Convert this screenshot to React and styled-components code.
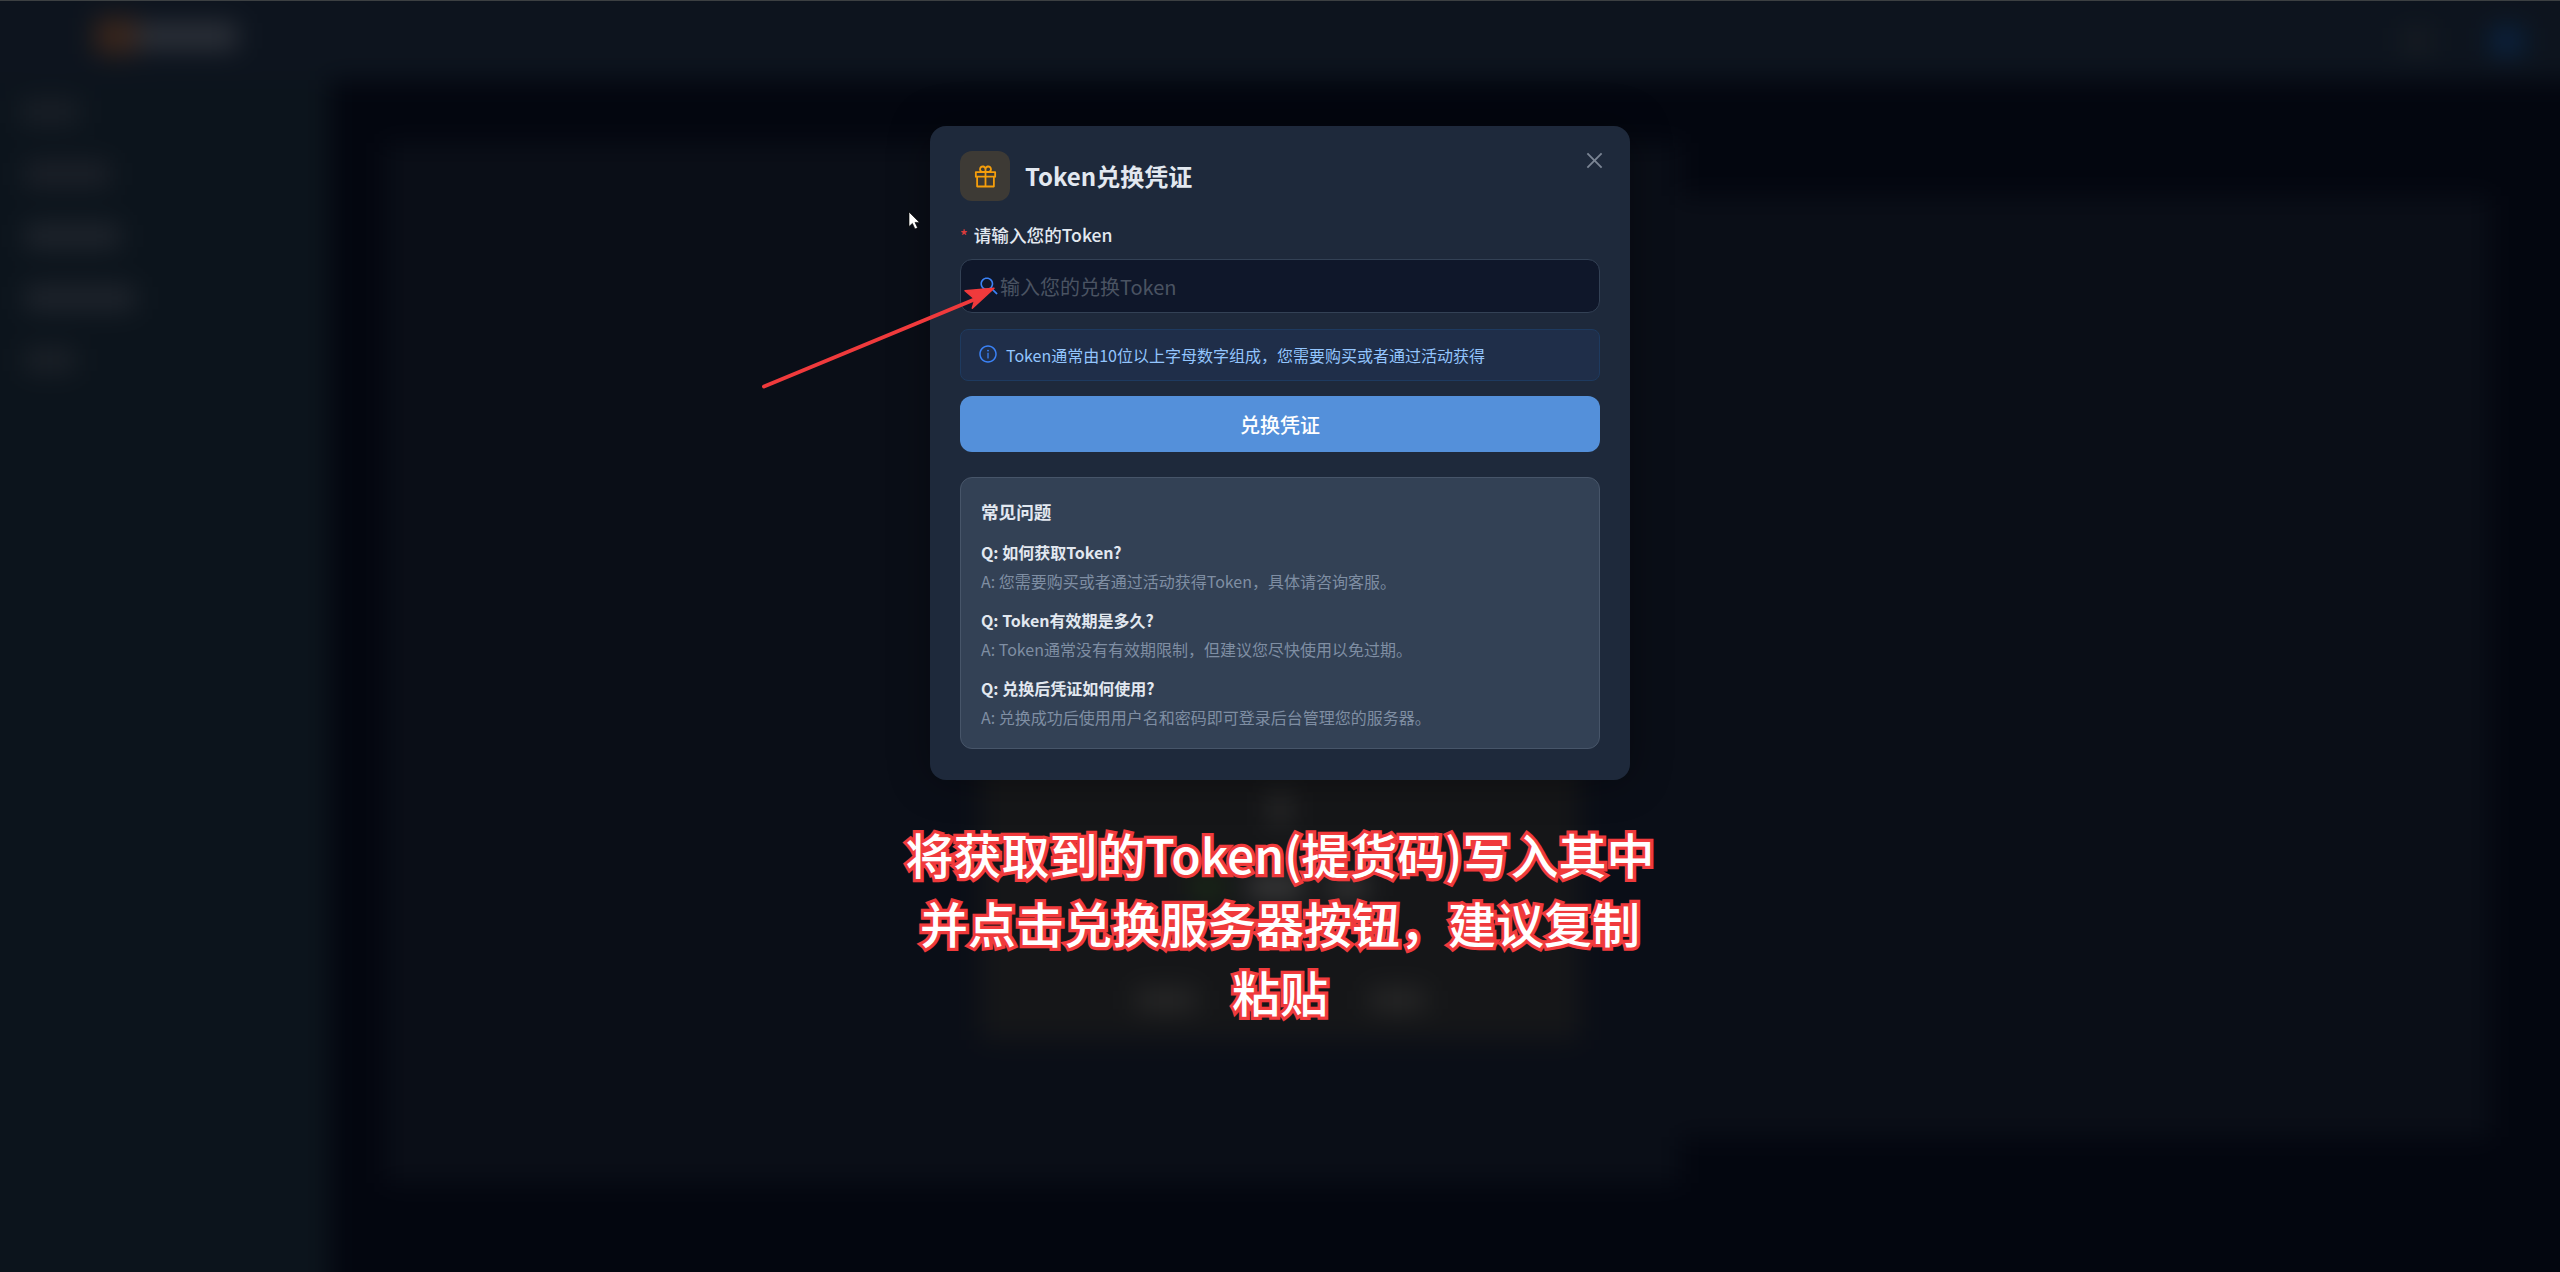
import React from "react";
import styled, { createGlobalStyle } from "styled-components";
import { AiOutlineClose, AiOutlineGift, AiOutlineInfoCircle, AiOutlineSearch } from "react-icons/ai";

const FONT = `"Noto Sans CJK SC", sans-serif`;

const faqs = [
  { q: "Q: 如何获取Token?", a: "A: 您需要购买或者通过活动获得Token，具体请咨询客服。" },
  { q: "Q: Token有效期是多久?", a: "A: Token通常没有有效期限制，但建议您尽快使用以免过期。" },
  { q: "Q: 兑换后凭证如何使用?", a: "A: 兑换成功后使用用户名和密码即可登录后台管理您的服务器。" },
];

const menu = [
  { w: 60, ml: 10, c: "#1a1f27" },
  { w: 85, ml: 15, c: "#1d2129" },
  { w: 95, ml: 15, c: "#20252d" },
  { w: 110, ml: 15, c: "#20252d" },
  { w: 50, ml: 15, c: "#1c2128" },
];

const App = () => {
  return (
    <Screen>
      <GlobalStyle />
      <Backdrop>
        <TopBar>
          <Logo>
            <LogoMark />
            <LogoName />
          </Logo>
          <TopActions>
            <TopIcon $color="#171c22" />
            <TopIcon $color="#0a2444" />
          </TopActions>
        </TopBar>
        <SideBar>
          {menu.map((item, i) => (
            <MenuBar key={i} $w={item.w} $ml={item.ml} $color={item.c} />
          ))}
        </SideBar>
        <Main>
          <LeftPanel>
            <EmptyCard>
              <Tick />
              <BlurRow $top={50}>
                <Dot />
                <Bar $w={55} $color="#3d3d3d" />
                <Bar $w={40} $color="#363636" />
              </BlurRow>
              <BlurRow $top={91}>
                <Bar $w={60} $color="#282828" />
                <RowSpacer />
                <Bar $w={55} $color="#282828" />
              </BlurRow>
            </EmptyCard>
          </LeftPanel>
          <RightPanel />
        </Main>
      </Backdrop>
      <EdgeLine />

      <Overlay>
        <Modal>
          <CloseButton aria-label="关闭">
            <AiOutlineClose />
          </CloseButton>
          <ModalHeader>
            <IconBox>
              <AiOutlineGift />
            </IconBox>
            <ModalTitle>Token兑换凭证</ModalTitle>
          </ModalHeader>

          <FieldLabel>
            <Required>*</Required>请输入您的Token
          </FieldLabel>
          <InputWrap>
            <AiOutlineSearch />
            <TokenInput placeholder="输入您的兑换Token" />
          </InputWrap>

          <InfoBox>
            <AiOutlineInfoCircle />
            <span>Token通常由10位以上字母数字组成，您需要购买或者通过活动获得</span>
          </InfoBox>

          <SubmitButton>兑换凭证</SubmitButton>

          <FaqBox>
            <FaqTitle>常见问题</FaqTitle>
            {faqs.map((item, i) => (
              <FaqItem key={i}>
                <Question>{item.q}</Question>
                <Answer>{item.a}</Answer>
              </FaqItem>
            ))}
          </FaqBox>
        </Modal>
        <Caption>将获取到的Token(提货码)写入其中并点击兑换服务器按钮，建议复制粘贴</Caption>
      </Overlay>

      <Annotation viewBox="0 0 2560 1272">
        <line x1="764" y1="386.5" x2="978" y2="298" stroke="#f03a3c" strokeWidth="4" strokeLinecap="round" />
        <polygon
          points="994,288.3 965,290.7 975,299.3 972.3,308.3"
          fill="#f03a3c"
          stroke="#f03a3c"
          strokeWidth="1.5"
          strokeLinejoin="round"
        />
        <path d="M909 212 L909 226.5 L912.4 223.4 L915 229 L917.6 227.8 L915 222.4 L919.5 222.4 Z" fill="#fff" stroke="#000" strokeWidth="0.6" />
      </Annotation>
    </Screen>
  );
};

const GlobalStyle = createGlobalStyle`
  html, body {
    margin: 0;
    padding: 0;
    background: #03060f;
    overflow: hidden;
  }
  * {
    box-sizing: border-box;
  }
`;

const Screen = styled.div`
  position: relative;
  width: 100vw;
  height: 100vh;
  overflow: hidden;
  background: #03060f;
  font-family: ${FONT};
`;

const EdgeLine = styled.div`
  position: absolute;
  top: 0;
  left: 0;
  right: 0;
  height: 1px;
  background: #3c4042;
`;

/* the page behind the dialog: extends 40px past the window so the blur has no soft edge */
const Backdrop = styled.div`
  display: grid;
  grid-template-columns: 370px 1fr;
  grid-template-rows: 120px 1fr;
  width: calc(100% + 80px);
  height: calc(100% + 80px);
  margin: -40px;
  background: #03060f;
  filter: blur(13px);
`;

const TopBar = styled.header`
  grid-column: 1 / 3;
  display: flex;
  align-items: flex-end;
  justify-content: space-between;
  padding: 0 78px 26px 135px;
  background: #0d141e;
`;

const Logo = styled.div`
  display: flex;
  align-items: center;
`;

const LogoMark = styled.div`
  width: 42px;
  height: 36px;
  background: #3a261c;
`;

const LogoName = styled.div`
  width: 100px;
  height: 26px;
  background: #2e323a;
`;

const TopActions = styled.div`
  display: flex;
  align-items: center;
  gap: 60px;
`;

const TopIcon = styled.div`
  width: 30px;
  height: 26px;
  background: ${(p) => p.$color};
`;

const SideBar = styled.aside`
  display: flex;
  flex-direction: column;
  align-items: flex-start;
  gap: 38px;
  padding: 20px 0 0 50px;
  background: #0c141c;
`;

const MenuBar = styled.div`
  width: ${(p) => p.$w}px;
  height: 24px;
  margin-left: ${(p) => p.$ml}px;
  background: ${(p) => p.$color};
`;

const Main = styled.main`
  display: grid;
  grid-template-columns: 1295px 810px;
  align-items: start;
  padding: 63px 0 0 55px;
`;

const LeftPanel = styled.section`
  height: 1040px;
  padding: 257px 0 0 595px;
  background: #0a0e17;
`;

const RightPanel = styled.section`
  height: 941px;
  margin-top: 53px;
  background: #0a0e17;
`;

const EmptyCard = styled.div`
  display: flex;
  flex-direction: column;
  align-items: center;
  height: 640px;
  width: 600px;
  padding-top: 392px;
  background: #151618;
`;

const Tick = styled.div`
  width: 18px;
  height: 34px;
  background: #2c2c2c;
`;

const BlurRow = styled.div`
  display: flex;
  align-items: center;
  justify-content: center;
  gap: 25px;
  margin-top: ${(p) => p.$top}px;
`;

const Dot = styled.div`
  width: 30px;
  height: 20px;
  background: #1a2e15;
`;

const Bar = styled.div`
  width: ${(p) => p.$w}px;
  height: 22px;
  background: ${(p) => p.$color};
`;

const RowSpacer = styled.div`
  width: 124px;
`;

const Overlay = styled.div`
  position: absolute;
  inset: 0;
  display: flex;
  flex-direction: column;
  align-items: center;
  padding-top: 126px;
`;

const Modal = styled.div`
  position: relative;
  width: 700px;
  padding: 25px 30px 31px;
  border-radius: 16px;
  background: #1e293b;
  box-shadow: 0 0 40px rgba(0, 0, 0, 0.35);
`;

const CloseButton = styled.button`
  position: absolute;
  top: 23px;
  right: 24px;
  display: flex;
  padding: 0;
  border: 0;
  background: none;
  color: #7b8594;
  font-size: 23px;
`;

const ModalHeader = styled.div`
  display: flex;
  align-items: center;
  gap: 15px;
`;

const IconBox = styled.div`
  display: flex;
  align-items: center;
  justify-content: center;
  width: 50px;
  height: 50px;
  border-radius: 12px;
  background: #3d3a35;
  color: #f59e0b;
  font-size: 27px;
`;

const ModalTitle = styled.h2`
  margin: 0;
  color: #e2e8f0;
  font-size: 24px;
  font-weight: 700;
  line-height: 32px;
`;

const FieldLabel = styled.label`
  display: block;
  margin-top: 22px;
  color: #e2e8f0;
  font-size: 17.6px;
  font-weight: 500;
  line-height: 24px;
`;

const Required = styled.span`
  margin-right: 6px;
  color: #dc3c3c;
  font-size: 16px;
  line-height: 0;
`;

const InputWrap = styled.div`
  display: flex;
  align-items: center;
  height: 54px;
  margin-top: 12px;
  padding-left: 17px;
  border: 1px solid #334155;
  border-radius: 12px;
  background: #0f172a;
  svg {
    flex: none;
    color: #3b82f6;
    font-size: 22px;
  }
`;

const TokenInput = styled.input`
  flex: 1;
  padding: 0;
  border: 0;
  outline: 0;
  background: none;
  color: #e2e8f0;
  font-family: ${FONT};
  font-size: 20px;
  &::placeholder {
    color: #4a5362;
    opacity: 1;
  }
`;

const InfoBox = styled.div`
  display: flex;
  align-items: center;
  gap: 8px;
  height: 52px;
  margin-top: 16px;
  padding: 0 17px;
  border: 1px solid #1e3a5f;
  border-radius: 8px;
  background: #1f2e49;
  color: #93c5fd;
  font-size: 16px;
  svg {
    flex: none;
    margin-top: -2px;
    color: #3b82f6;
    font-size: 20px;
  }
`;

const SubmitButton = styled.button`
  display: block;
  width: 100%;
  height: 56px;
  margin-top: 15px;
  border: 0;
  border-radius: 12px;
  background: #5490da;
  color: #fff;
  font-family: ${FONT};
  font-size: 20px;
  font-weight: 500;
`;

const FaqBox = styled.div`
  margin-top: 25px;
  padding: 22px 20px 19px;
  border: 1px solid #475569;
  border-radius: 12px;
  background: #334155;
`;

const FaqTitle = styled.div`
  margin-bottom: 16px;
  color: #e2e8f0;
  font-size: 17.6px;
  font-weight: 700;
  line-height: 24px;
`;

const FaqItem = styled.div`
  margin-bottom: 15px;
  &:last-child {
    margin-bottom: 0;
  }
`;

const Question = styled.div`
  margin-bottom: 5px;
  color: #e2e8f0;
  font-size: 16px;
  font-weight: 700;
  line-height: 24px;
`;

const Answer = styled.div`
  color: #7f8ea3;
  font-size: 16px;
  line-height: 24px;
`;

const Caption = styled.div`
  width: 755px;
  margin-top: 39px;
  color: #fff;
  font-family: ${FONT};
  font-size: 48px;
  font-weight: 500;
  line-height: 69px;
  text-align: center;
  -webkit-text-stroke: 6.5px #f03a3c;
  paint-order: stroke fill;
`;

const Annotation = styled.svg`
  position: absolute;
  inset: 0;
  width: 100%;
  height: 100%;
  pointer-events: none;
`;

export default App;
